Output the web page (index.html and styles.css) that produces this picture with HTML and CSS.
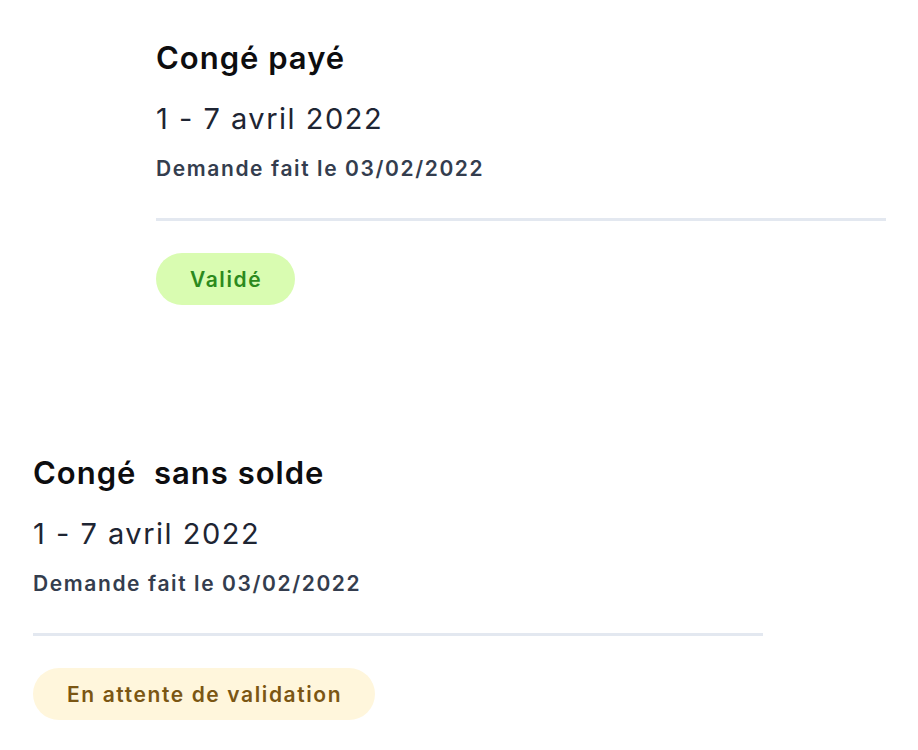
FILE: index.html
```html
<!DOCTYPE html>
<html lang="fr">
<head>
<meta charset="utf-8">
<title>Congés</title>
<link rel="stylesheet" href="styles.css">
</head>
<body>
<main class="list">
  <section class="card card--first">
    <h2 class="card__title">Congé payé</h2>
    <p class="card__dates">1 - 7 avril 2022</p>
    <p class="card__meta">Demande fait le 03/02/2022</p>
    <hr class="card__divider">
    <span class="badge badge--ok">Validé</span>
  </section>
  <section class="card card--second">
    <h2 class="card__title">Congé&nbsp; sans solde</h2>
    <p class="card__dates">1 - 7 avril 2022</p>
    <p class="card__meta">Demande fait le 03/02/2022</p>
    <hr class="card__divider">
    <span class="badge badge--pending">En attente de validation</span>
  </section>
</main>
</body>
</html>
```

FILE: styles.css
```css
* { box-sizing: border-box; }
html, body {
  margin: 0;
  padding: 0;
  background: #ffffff;
}
body {
  font-family: Inter, "Noto Sans", "Liberation Sans", sans-serif;
  width: 918px;
  height: 750px;
  overflow: hidden;
}
.list {
  display: flex;
  flex-direction: column;
  padding-top: 40px;
}
.card {
  display: flex;
  flex-direction: column;
  align-items: flex-start;
  width: 730px;
}
.card--first { margin-left: 156px; }
.card--second { margin-left: 33px; margin-top: 150px; }
.card__title {
  margin: 0;
  font-size: 31px;
  line-height: 36px;
  font-weight: 600;
  color: #0d0d0f;
  letter-spacing: 1px;
  white-space: pre;
}
.card__dates {
  margin: 26px 0 0;
  font-size: 29px;
  line-height: 34px;
  font-weight: 400;
  color: #1e2533;
  letter-spacing: 1.5px;
}
.card__meta {
  margin: 21px 0 0;
  font-size: 21px;
  line-height: 24px;
  font-weight: 600;
  color: #343d4e;
  letter-spacing: 1.6px;
}
.card__divider {
  align-self: stretch;
  margin: 37px 0 0;
  border: 0;
  height: 3px;
  background: #e3e8f0;
}
.badge {
  margin-top: 32px;
  height: 52px;
  display: inline-flex;
  align-items: center;
  padding: 0 33px 0 34px;
  border-radius: 26px;
  font-size: 21px;
  font-weight: 600;
  letter-spacing: 1.6px;
}
.badge--ok {
  background: #d9fcb1;
  color: #2c8a1d;
}
.badge--pending {
  background: #fff6dc;
  color: #7b5613;
}
```
